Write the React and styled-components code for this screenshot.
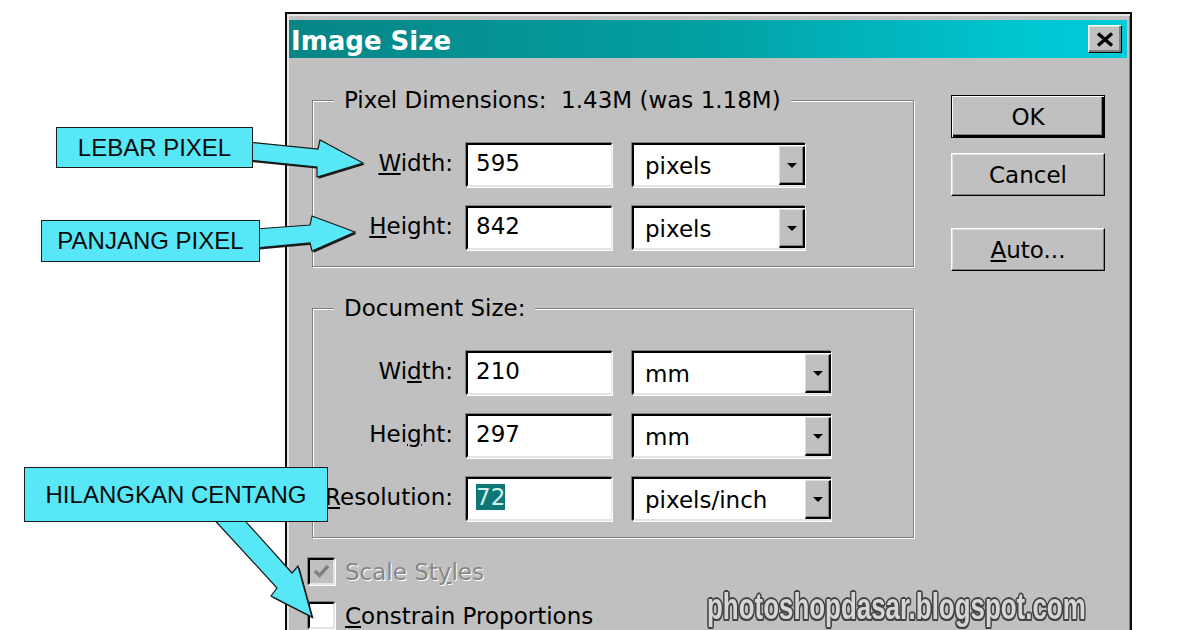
import styled, { createGlobalStyle } from "styled-components";

const UI = `"DejaVu Sans", Verdana, sans-serif`;
const ARIAL = `"Liberation Sans", Arial, sans-serif`;

const GlobalStyle = createGlobalStyle`
  html, body { margin: 0; padding: 0; background: #fff; }
  body { overflow: hidden; }
  * { box-sizing: border-box; }
`;

// `letter` is the underlined access key of each label
const pixelRows = [
  { pre: "", letter: "W", post: "idth:", value: "595", unit: "pixels" },
  { pre: "", letter: "H", post: "eight:", value: "842", unit: "pixels" },
];

const docRows = [
  { pre: "Wi", letter: "d", post: "th:", value: "210", unit: "mm" },
  { pre: "Hei", letter: "g", post: "ht:", value: "297", unit: "mm" },
  { pre: "", letter: "R", post: "esolution:", value: "72", unit: "pixels/inch", selected: true },
];

const arrows = [
  "248,142 318,149 320,140 363,163 317,177 317,167 248,160",
  "255,229 310,225 312,216 355,232 312,251 310,243 255,248",
  "209,514 239,514 292,573 298,566 312,617 271,596 277,588",
];

const Row = ({ pre, letter, post, value, unit, selected, selectWidth }) => (
  <RowGrid $selectWidth={selectWidth}>
    <Label>
      {pre}
      <u>{letter}</u>
      {post}
    </Label>
    <TextField>{selected ? <Selected>{value}</Selected> : value}</TextField>
    <Select>
      <SelectValue>{unit}</SelectValue>
      <ArrowButton>
        <Caret />
      </ArrowButton>
    </Select>
  </RowGrid>
);

const ImageSizeDialog = () => (
  <Dialog>
    <TitleBar>
      <TitleText>Image Size</TitleText>
      <CloseButton>
        <svg width="18" height="15" viewBox="0 0 18 15">
          <path d="M2 1.5 L16 13.5 M16 1.5 L2 13.5" stroke="#000" strokeWidth="3.4" />
        </svg>
      </CloseButton>
    </TitleBar>

    <Body>
      <MainColumn>
        <Group $gapAfter={28}>
          <Legend>Pixel Dimensions:  1.43M (was 1.18M)</Legend>
          <Rows>
            {pixelRows.map((r) => (
              <Row key={r.post} {...r} selectWidth={173} />
            ))}
          </Rows>
        </Group>

        <Group $gapAfter={20}>
          <Legend>Document Size:</Legend>
          <Rows>
            {docRows.map((r) => (
              <Row key={r.post} {...r} selectWidth={199} />
            ))}
          </Rows>
        </Group>

        <Checks>
          <CheckRow $disabled>
            <CheckBox $disabled>
              <svg width="19" height="17" viewBox="0 0 19 17">
                <path d="M3 8 L7.5 12.5 L16 3" fill="none" stroke="#808080" strokeWidth="3.4" />
              </svg>
            </CheckBox>
            <span>
              Scale St<u>y</u>les
            </span>
          </CheckRow>
          <CheckRow>
            <CheckBox />
            <span>
              <u>C</u>onstrain Proportions
            </span>
          </CheckRow>
        </Checks>
      </MainColumn>

      <ButtonColumn>
        <Button $default $gap={15}>OK</Button>
        <Button $gap={32}>Cancel</Button>
        <Button>
          <span>
            <u>A</u>uto...
          </span>
        </Button>
      </ButtonColumn>
    </Body>
  </Dialog>
);

export default function App() {
  return (
    <>
      <GlobalStyle />
      <Page>
        <ImageSizeDialog />
        <ArrowLayer width="1200" height="630" viewBox="0 0 1200 630">
          {arrows.map((pts) => (
            <g key={pts}>
              <polygon points={pts} fill="#1a1a1a" transform="translate(1.6 1.8)" />
              <polygon points={pts} fill="#58e7f7" stroke="#1a1a1a" strokeWidth="1.2" />
            </g>
          ))}
        </ArrowLayer>
        <Callout $x={56} $y={127} $w={197} $h={41}>LEBAR PIXEL</Callout>
        <Callout $x={41} $y={220} $w={219} $h={42}>PANJANG PIXEL</Callout>
        <Callout $x={24} $y={467} $w={304} $h={55}>HILANGKAN CENTANG</Callout>
        <Watermark>photoshopdasar.blogspot.com</Watermark>
      </Page>
    </>
  );
}

const Page = styled.div`
  position: relative;
  width: 1200px;
  height: 630px;
  overflow: hidden;
  padding: 12px 0 0 285px;
  background: #fff;
`;

const Dialog = styled.div`
  width: 847px;
  background: #c0c0c0;
  border: 2px solid #0a0a0a;
  padding: 6px 3px 40px 2px;
  box-shadow: inset 2px 2px 0 #e8e8e8, inset -1px -1px 0 #808080;
  font-family: ${UI};
  font-size: 23px;
  color: #000;
`;

const TitleBar = styled.div`
  height: 38px;
  display: flex;
  align-items: center;
  justify-content: space-between;
  padding: 0 5px 0 2px;
  background: linear-gradient(90deg, #078585 0%, #03a0a4 50%, #00c6d2 88%, #00cbd8 100%);
`;

const TitleText = styled.span`
  font-weight: bold;
  font-size: 26px;
  line-height: 34px;
  padding-top: 4px;
  color: #fff;
`;

const CloseButton = styled.div`
  width: 34px;
  height: 28px;
  display: flex;
  align-items: center;
  justify-content: center;
  background: #c0c0c0;
  border: 1px solid;
  border-color: #fff #000 #000 #fff;
  box-shadow: inset -2px -2px 0 #808080, inset 1px 1px 0 #dfdfdf;
`;

const Body = styled.div`
  display: flex;
  gap: 37px;
  padding: 29px 22px 0 23px;
`;

const MainColumn = styled.div`
  width: 602px;
  display: flex;
  flex-direction: column;
`;

const Group = styled.fieldset`
  margin: 0 0 ${(p) => p.$gapAfter}px;
  padding: 0 0 16px;
  min-width: 0;
  border: 1px solid #808080;
  box-shadow: inset 1px 1px 0 #fff, 1px 1px 0 #fff;
`;

const Legend = styled.legend`
  margin-left: 21px;
  padding: 0 10px;
  line-height: 26px;
  white-space: pre;
  background: #c0c0c0;
`;

const Rows = styled.div`
  margin-top: 30px;
  display: flex;
  flex-direction: column;
  gap: 19px;
`;

const RowGrid = styled.div`
  display: grid;
  grid-template-columns: 140px 146px ${(p) => p.$selectWidth + 7}px;
  column-gap: 13px;
  align-items: start;
`;

const Label = styled.div`
  text-align: right;
  white-space: nowrap;
  line-height: 26px;
  padding-top: 7px;
`;

const sunken = `
  border-style: solid;
  border-width: 2px 1px 2px 2px;
  border-color: #000 #e4e4e4 #e4e4e4 #000;
  box-shadow: -1px -1px 0 #808080, 1px 1px 0 #fff;
`;

const TextField = styled.div`
  height: 44px;
  ${sunken}
  background: #fff;
  padding: 5px 0 0 8px;
  line-height: 26px;
`;

const Selected = styled.span`
  background: #0e7777;
  color: #d6eeee;
`;

const Select = styled.div`
  height: 44px;
  margin-left: 7px;
  display: flex;
  ${sunken}
  border-right-width: 0;
  background: #fff;
`;

const SelectValue = styled.span`
  flex: 1;
  padding: 8px 0 0 11px;
  line-height: 26px;
  white-space: nowrap;
`;

const ArrowButton = styled.span`
  width: 26px;
  margin-top: 1px;
  display: flex;
  align-items: center;
  justify-content: center;
  background: #c0c0c0;
  border-style: solid;
  border-width: 1px 2px 2px 1px;
  border-color: #dfdfdf #000 #000 #dfdfdf;
  box-shadow: inset -1px -1px 0 #808080;
`;

const Caret = styled.span`
  width: 0;
  height: 0;
  border-left: 5px solid transparent;
  border-right: 5px solid transparent;
  border-top: 5px solid #000;
`;

const Checks = styled.div`
  display: flex;
  flex-direction: column;
  gap: 17px;
  margin-left: -4px;
`;

const CheckRow = styled.div`
  display: flex;
  align-items: center;
  gap: 10px;
  height: 27px;
  color: ${(p) => (p.$disabled ? "#868686" : "#000")};
  text-shadow: ${(p) => (p.$disabled ? "1px 1px 0 #fff" : "none")};
`;

const CheckBox = styled.span`
  width: 27px;
  height: 27px;
  display: flex;
  align-items: center;
  justify-content: center;
  background: ${(p) => (p.$disabled ? "#c0c0c0" : "#fff")};
  ${sunken}
  border-width: 2px;
`;

const ButtonColumn = styled.div`
  width: 154px;
  padding-top: 8px;
  display: flex;
  flex-direction: column;
`;

const Button = styled.div`
  height: 43px;
  margin-bottom: ${(p) => p.$gap || 0}px;
  display: flex;
  align-items: center;
  justify-content: center;
  background: #c0c0c0;
  border: 1px solid;
  border-color: ${(p) => (p.$default ? "#000" : "#fff #000 #000 #fff")};
  box-shadow: ${(p) =>
    p.$default
      ? "inset 1px 1px 0 #fff, inset -2px -2px 0 #000, inset -3px -3px 0 #808080"
      : "inset -1px -1px 0 #808080, inset 1px 1px 0 #dfdfdf"};
`;

const ArrowLayer = styled.svg`
  position: absolute;
  left: 0;
  top: 0;
  pointer-events: none;
`;

const Callout = styled.div`
  position: absolute;
  left: ${(p) => p.$x}px;
  top: ${(p) => p.$y}px;
  width: ${(p) => p.$w}px;
  height: ${(p) => p.$h}px;
  display: flex;
  align-items: center;
  justify-content: center;
  background: #58e7f7;
  border: 1.5px solid #1c1c1c;
  font-family: ${ARIAL};
  font-size: 24px;
  color: #0a0a0a;
  white-space: nowrap;
`;

const Watermark = styled.div`
  position: absolute;
  left: 707px;
  top: 589px;
  font-family: ${ARIAL};
  font-weight: bold;
  font-size: 36px;
  line-height: 36px;
  white-space: nowrap;
  color: #d6d6d6;
  transform: scaleX(0.72);
  transform-origin: left top;
  text-shadow: -2px 0 #444, 2px 0 #444, 0 -2px #444, 0 2px #444, -1.5px -1.5px #444,
    1.5px -1.5px #444, -1.5px 1.5px #444, 1.5px 1.5px #444;
`;
